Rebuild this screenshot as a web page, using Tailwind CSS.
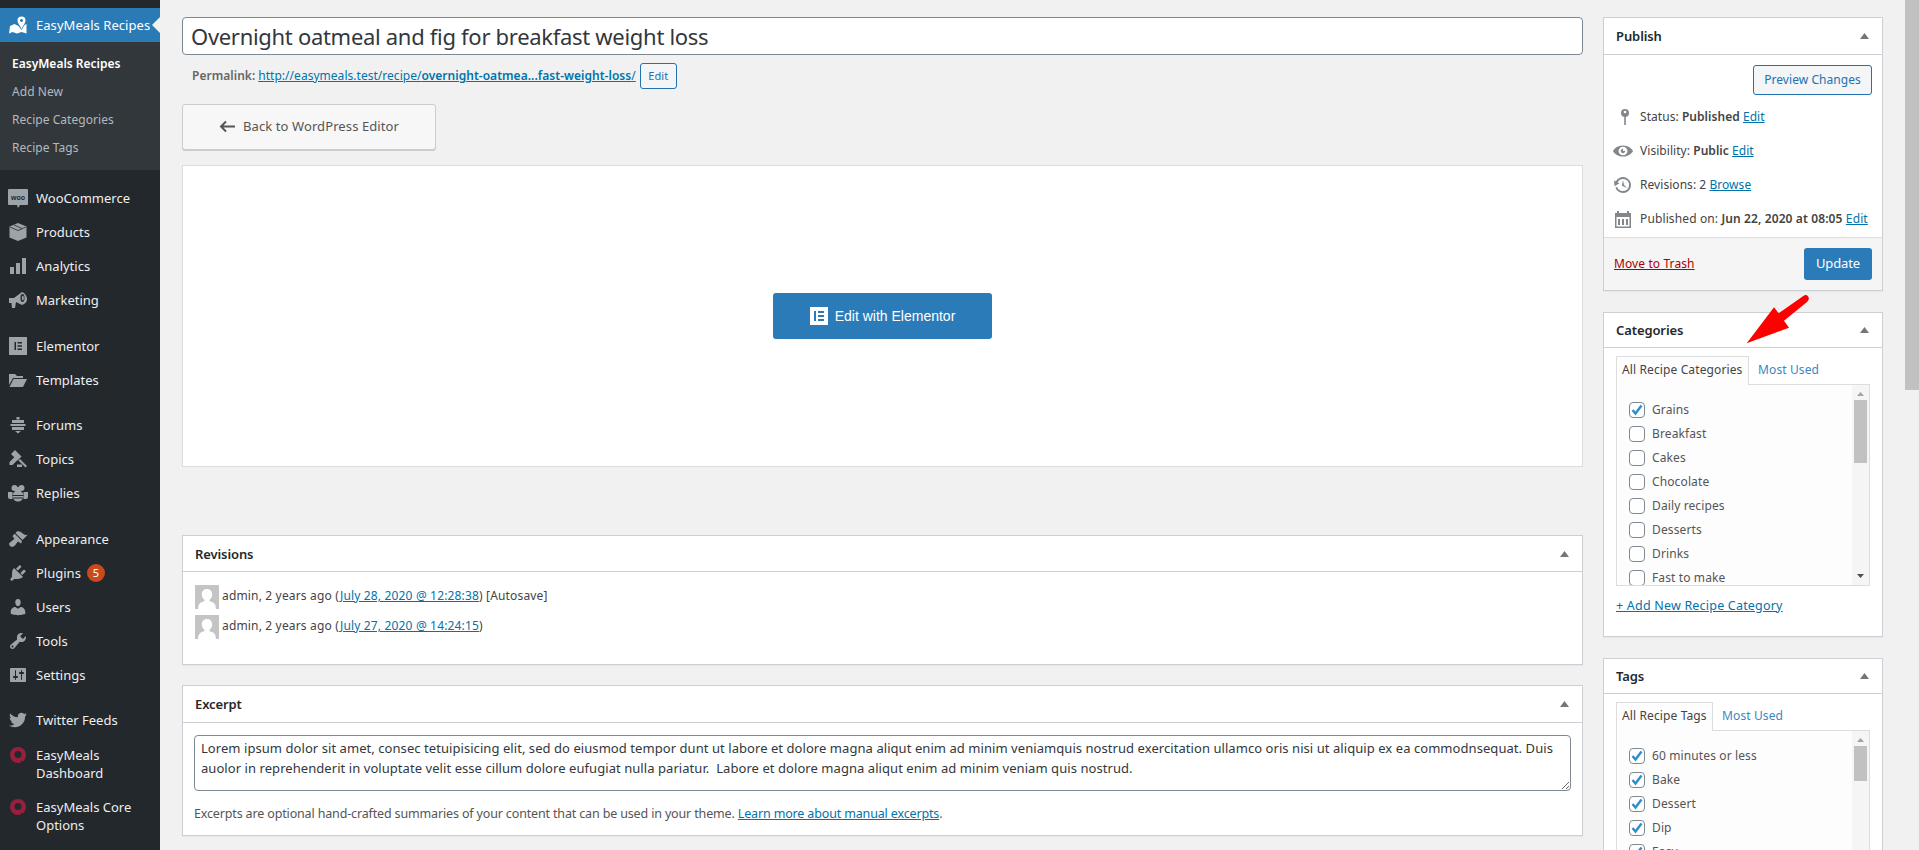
<!DOCTYPE html>
<html lang="en">
  <head>
    <meta charset="UTF-8" />
    <title>Edit Recipe</title>
    <script src="https://cdn.jsdelivr.net/npm/@tailwindcss/browser@4"></script>
  </head>
  <body class="bg-[#f1f1f1] text-[#444] text-[13px] font-['Noto_Sans',sans-serif] overflow-hidden">
    <div class="relative flex h-[850px] w-[1919px] overflow-hidden">
      <!-- Sidebar -->
      <aside class="w-[160px] shrink-0 bg-[#23282d] text-[#eee] pt-[8px]">
        <div class="relative flex items-center h-[34px] bg-[#2a7ab5] text-white">
          <span class="w-[36px] flex justify-center"><svg class="w-[20px] h-[20px]" viewBox="0 0 20 20" fill="#fff"><path d="M2 11l4.500-2 4 2 3 4 3-5 2-1v9.500l-5-1.500-4.500 1.500-4.500-1.500-3.500 1.500z"/><path fill-rule="evenodd" d="M13.500 1.500a4 4 0 0 1 4 4c0 2.500-2.500 5-4 8.500-1.500-3.500-4-6-4-8.500a4 4 0 0 1 4-4zm0 2.500a1.500 1.500 0 1 0 .01 0z"/></svg></span>
          <span class="pt-[2px] tracking-[0.05px]">EasyMeals Recipes</span>
          <span class="absolute right-0 top-[9px] border-y-[8px] border-r-[8px] border-y-transparent border-r-[#f1f1f1]"></span>
        </div>
        <div class="bg-[#32373c] py-[8px] text-[12px] text-[#b4b9be]">
          <div class="h-[28px] pl-[12px] flex items-center font-semibold text-white">EasyMeals Recipes</div>
          <div class="h-[28px] pl-[12px] flex items-center tracking-[0.05px]">Add New</div>
          <div class="h-[28px] pl-[12px] flex items-center tracking-[0.05px]">Recipe Categories</div>
          <div class="h-[28px] pl-[12px] flex items-center tracking-[0.05px]">Recipe Tags</div>
        </div>

        <div class="mt-[11px]">
          <div class="flex items-center h-[34px]">
            <span class="w-[36px] flex justify-center"><svg class="w-[20px] h-[20px]" viewBox="0 0 20 20"><path fill="#9ea3a8" d="M1 1h18a1 1 0 0 1 1 1v14a1 1 0 0 1-1 1h-7l-2 3-1-3H1a1 1 0 0 1-1-1V2a1 1 0 0 1 1-1z"/><text x="10" y="11.500" text-anchor="middle" font-size="7" font-weight="700" fill="#23282d" font-family="Liberation Sans">woo</text></svg></span>
            <span class="pt-[2px]">WooCommerce</span>
          </div>
          <div class="flex items-center h-[34px]">
            <span class="w-[36px] flex justify-center"><svg class="w-[20px] h-[20px]" viewBox="0 0 20 20"><path fill="#9ea3a8" d="M10 1l8.500 3.500v11L10 19l-8.500-3.500v-11z"/><path fill="none" stroke="#23282d" stroke-width=".8" d="M2 5l8 3.500L18 5M6 3l8 3.500"/></svg></span>
            <span class="pt-[2px]">Products</span>
          </div>
          <div class="flex items-center h-[34px]">
            <span class="w-[36px] flex justify-center"><svg class="w-[20px] h-[20px]" viewBox="0 0 20 20" fill="#9ea3a8"><path d="M2 11h4v7H2zM8 7h4v11H8zM14 2h4v16h-4z"/></svg></span>
            <span class="pt-[2px]">Analytics</span>
          </div>
          <div class="flex items-center h-[34px]">
            <span class="w-[36px] flex justify-center"><svg class="w-[20px] h-[20px]" viewBox="0 0 20 20" fill="#9ea3a8"><path d="M1 8h5l8-6 2 1c2 2 3 4 3 6s-1 4-3 5l-2 1-6-3-1 6H4l-.5-5H1z"/><ellipse cx="14.500" cy="8" rx="2" ry="4" fill="#23282d"/><ellipse cx="14.800" cy="8" rx="1" ry="2.500"/></svg></span>
            <span class="pt-[2px]">Marketing</span>
          </div>
        </div>

        <div class="mt-[12px]">
          <div class="flex items-center h-[34px]">
            <span class="w-[36px] flex justify-center"><svg class="w-[20px] h-[20px]" viewBox="0 0 20 20"><path fill="#9ea3a8" d="M1 1h18v18H1z"/><path fill="#23282d" d="M6.500 6h1.500v8H6.500zM9.500 6h4.500v1.500H9.500zM9.500 9.200h4.500v1.500H9.500zM9.500 12.500h4.500V14H9.500z"/></svg></span>
            <span class="pt-[2px]">Elementor</span>
          </div>
          <div class="flex items-center h-[34px]">
            <span class="w-[36px] flex justify-center"><svg class="w-[20px] h-[20px]" viewBox="0 0 20 20" fill="#9ea3a8"><path d="M1 4h6l2 2h6v2H5L1 15z"/><path d="M5.500 9H19l-4 8H1.500z"/></svg></span>
            <span class="pt-[2px]">Templates</span>
          </div>
        </div>

        <div class="mt-[11px]">
          <div class="flex items-center h-[34px]">
            <span class="w-[36px] flex justify-center"><svg class="w-[20px] h-[20px]" viewBox="0 0 20 20" fill="#9ea3a8"><path d="M8.500 2h3v2.500h-3zM4 5h12v3H4zM2.500 9h15v2h-15zM4 12h12v3H4zM7 16h6l-3 2.500z"/></svg></span>
            <span class="pt-[2px]">Forums</span>
          </div>
          <div class="flex items-center h-[34px]">
            <span class="w-[36px] flex justify-center"><svg class="w-[20px] h-[20px]" viewBox="0 0 20 20" fill="#9ea3a8"><path d="M7 1l6.500 6.500-4 4L3 5zM1.500 13l5-5 3 3-5 5H1.500zM12 10l7 7-1.500 1.500-7-7zM9 15.500h5V18H9z"/></svg></span>
            <span class="pt-[2px]">Topics</span>
          </div>
          <div class="flex items-center h-[34px]">
            <span class="w-[36px] flex justify-center"><svg class="w-[20px] h-[20px]" viewBox="0 0 20 20" fill="#9ea3a8"><circle cx="6.500" cy="5" r="3"/><circle cx="13.500" cy="5" r="3"/><circle cx="10" cy="7" r="3"/><ellipse cx="10" cy="13" rx="5.500" ry="5.500"/><path d="M0 9h4.500v7H2a2 2 0 0 1-2-2zM20 9h-4.500v7H18a2 2 0 0 0 2-2z"/><path stroke="#23282d" d="M4.500 12.500h11M5 15h10"/></svg></span>
            <span class="pt-[2px]">Replies</span>
          </div>
        </div>

        <div class="mt-[12px]">
          <div class="flex items-center h-[34px]">
            <span class="w-[36px] flex justify-center"><svg class="w-[20px] h-[20px]" viewBox="0 0 20 20" fill="#9ea3a8"><path d="M14.480 11.060L7.410 3.990l1.500-1.500c.5-.56 2.300-.47 3.510.32 1.210.8 1.430 1.280 2.910 2.100 1.180.64 2.450 1.260 4.450.85zm-.71.71L6.700 4.700 4.930 6.470c-.39.39-.39 1.020 0 1.410l1.060 1.060c.39.39.39 1.030 0 1.420-.6.6-1.430 1.110-2.210 1.690-.35.260-.7.530-1.010.84C1.430 13.230.99 14.400 1.250 15.500c.27 1.100 1.140 1.960 2.230 2.230 1.100.27 2.270-.18 3.610-1.530.31-.31.58-.66.84-1.010.58-.78 1.090-1.610 1.690-2.210.39-.39 1.030-.39 1.420 0l1.060 1.060c.39.39 1.020.39 1.410 0z"/></svg></span>
            <span class="pt-[2px]">Appearance</span>
          </div>
          <div class="flex items-center h-[34px]">
            <span class="w-[36px] flex justify-center"><svg class="w-[20px] h-[20px]" viewBox="0 0 20 20" fill="#9ea3a8"><path d="M13.110 4.360L9.870 7.600 8 5.730l3.240-3.240c.35-.34 1.050-.2 1.560.32.52.51.66 1.210.31 1.550zm-8 1.770l.91-1.120 9.010 9.010-1.190.84c-.71.71-2.630 1.160-3.820 1.160H6.140L4.900 17.260c-.59.59-1.540.59-2.120 0-.59-.58-.59-1.530 0-2.120l1.240-1.240v-3.880c0-1.130.4-3.190 1.090-3.890zm7.260 3.970l3.240-3.240c.34-.35 1.040-.21 1.550.31.52.51.66 1.210.31 1.550l-3.240 3.250z"/></svg></span>
            <span class="pt-[2px]">Plugins</span>
            <span class="ml-[6px] w-[18px] h-[18px] rounded-full bg-[#ca4a1f] text-white text-[11px] flex items-center justify-center">5</span>
          </div>
          <div class="flex items-center h-[34px]">
            <span class="w-[36px] flex justify-center"><svg class="w-[20px] h-[20px]" viewBox="0 0 20 20" fill="#9ea3a8"><path d="M10 9.250c-2.270 0-2.730-3.440-2.730-3.440C7 4.020 7.820 2 9.970 2c2.160 0 2.980 2.020 2.710 3.810 0 0-.41 3.440-2.680 3.440zm0 2.570L12.720 10c2.390 0 4.520 2.330 4.520 4.530v2.490s-3.650 1.130-7.240 1.130c-3.650 0-7.240-1.130-7.240-1.130v-2.490c0-2.250 1.940-4.480 4.470-4.480z"/></svg></span>
            <span class="pt-[2px]">Users</span>
          </div>
          <div class="flex items-center h-[34px]">
            <span class="w-[36px] flex justify-center"><svg class="w-[20px] h-[20px]" viewBox="0 0 20 20" fill="#9ea3a8"><path d="M16.680 9.770c-1.340 1.340-3.300 1.670-4.950.99l-5.410 6.520c-.99.99-2.590.99-3.580 0s-.99-2.590 0-3.570l6.520-5.420c-.68-1.650-.35-3.610.99-4.950 1.280-1.280 3.120-1.620 4.720-1.060l-2.890 2.890 2.820 2.820 2.860-2.870c.53 1.580.18 3.390-1.080 4.650zM3.810 16.210c.4.39 1.040.39 1.430 0 .4-.4.4-1.040 0-1.430-.39-.4-1.030-.4-1.430 0-.39.39-.39 1.030 0 1.430z"/></svg></span>
            <span class="pt-[2px]">Tools</span>
          </div>
          <div class="flex items-center h-[34px]">
            <span class="w-[36px] flex justify-center"><svg class="w-[20px] h-[20px]" viewBox="0 0 20 20" fill="#9ea3a8"><path d="M18 16V4c0-.55-.45-1-1-1H3c-.55 0-1 .45-1 1v12c0 .55.45 1 1 1h14c.55 0 1-.45 1-1zM8 11h1c.55 0 1 .45 1 1s-.45 1-1 1H8v1.500c0 .28-.22.5-.5.5s-.5-.22-.5-.5V13H6c-.55 0-1-.45-1-1s.45-1 1-1h1V5.500c0-.28.22-.5.5-.5s.5.22.5.5V11zm5-2h-1c-.55 0-1-.45-1-1s.45-1 1-1h1V5.500c0-.28.22-.5.5-.5s.5.22.5.5V7h1c.55 0 1 .45 1 1s-.45 1-1 1h-1v5.500c0 .28-.22.5-.5.5s-.5-.22-.5-.5V9z"/></svg></span>
            <span class="pt-[2px]">Settings</span>
          </div>
        </div>

        <div class="mt-[11px]">
          <div class="flex items-center h-[34px]">
            <span class="w-[36px] flex justify-center"><svg class="w-[20px] h-[20px]" viewBox="0 0 20 20" fill="#9ea3a8"><path d="M18.940 4.460c-.49.73-1.110 1.380-1.830 1.900.01.15.01.31.01.47 0 4.850-3.690 10.440-10.430 10.440-2.070 0-4-.61-5.630-1.650.29.03.58.05.88.05 1.720 0 3.300-.59 4.550-1.570-1.600-.03-2.950-1.090-3.420-2.550.22.04.45.07.69.07.33 0 .66-.05.96-.13-1.670-.34-2.940-1.820-2.940-3.600v-.04c.5.27 1.060.44 1.660.46-.98-.66-1.630-1.780-1.630-3.060 0-.67.18-1.300.5-1.840 1.810 2.220 4.510 3.680 7.560 3.830-.06-.27-.1-.55-.1-.84 0-2.020 1.650-3.660 3.670-3.660 1.060 0 2.010.44 2.680 1.160.83-.17 1.620-.47 2.330-.9-.28.85-.82 1.570-1.550 2.020.73-.08 1.430-.28 2.090-.57z"/></svg></span>
            <span class="pt-[2px]">Twitter Feeds</span>
          </div>
          <div class="flex h-[53px] pt-[9px]">
            <span class="w-[36px] flex justify-center"><svg class="w-[20px] h-[20px]" viewBox="0 0 20 20"><circle cx="10" cy="9" r="8" fill="#98203f"/><circle cx="10" cy="8.500" r="3.500" fill="#23282d"/><path fill="#23282d" d="M13 14l3 4h-3z"/></svg></span>
            <span class="leading-[18px]">EasyMeals<br />Dashboard</span>
          </div>
          <div class="flex h-[53px] pt-[8px]">
            <span class="w-[36px] flex justify-center"><svg class="w-[20px] h-[20px]" viewBox="0 0 20 20"><circle cx="10" cy="9" r="8" fill="#98203f"/><circle cx="10" cy="8.500" r="3.500" fill="#23282d"/><path fill="#23282d" d="M13 14l3 4h-3z"/></svg></span>
            <span class="leading-[18px]">EasyMeals Core<br />Options</span>
          </div>
        </div>
      </aside>

      <!-- Main column -->
      <main class="w-[1401px] shrink-0 ml-[22px] pt-[17px]">
        <input
          type="text"
          value="Overnight oatmeal and fig for breakfast weight loss"
          class="block w-full h-[38px] bg-white border border-[#7e8993] rounded-[4px] px-[8px] text-[22px] text-[#32373c] tracking-[-0.3px]"
        />
        <div class="flex items-center h-[26px] mt-[8px] pl-[10px] text-[12px] tracking-[0.03px] text-[#666]">
          <strong class="font-semibold">Permalink:</strong>
          <a href="#" class="ml-[3px] text-[#0073aa] underline">http://easymeals.test/recipe/<span class="font-semibold">overnight-oatmea...fast-weight-loss</span>/</a>
          <button class="ml-[4px] w-[37px] h-[26px] border border-[#2271b1] rounded-[3px] bg-[#f3f5f6] text-[#2271b1] text-[11px]">Edit</button>
        </div>

        <button class="flex items-center justify-center w-[254px] h-[46px] mt-[15px] bg-[#f7f7f7] border border-[#ccc] rounded-[3px] shadow-[0_1px_0_#ccc] text-[#555] text-[13px] tracking-[0.1px]">
          <svg class="w-[16px] h-[16px] mr-[8px]" viewBox="0 0 16 16" fill="none" stroke="#555" stroke-width="2"><path d="M16 7.500H2M7 2.500l-5 5 5 5"/></svg>
          Back to WordPress Editor
        </button>

        <div class="flex items-center justify-center h-[302px] mt-[15px] bg-white border border-[#ddd]">
          <button class="flex items-center justify-center w-[219px] h-[46px] bg-[#2b7bb9] rounded-[3px] text-white text-[14px] font-['Liberation_Sans',sans-serif]">
            <span class="flex items-center justify-center w-[18px] h-[18px] bg-white mr-[7px]"><svg class="w-[12px] h-[12px]" viewBox="0 0 12 12" fill="#2b7bb9"><path d="M1 1h2v10H1zM5 1h6v2H5zM5 5h6v2H5zM5 9h6v2H5z"/></svg></span>
            Edit with Elementor
          </button>
        </div>

        <section class="h-[130px] mt-[68px] bg-white border border-[#ccd0d4] shadow-[0_1px_1px_rgba(0,0,0,0.04)]">
          <div class="flex items-center justify-between h-[36px] pl-[12px] pr-[13px] border-b border-[#ccd0d4] font-semibold tracking-[-0.1px] text-[#23282d]">
            <span class="pt-[2px]">Revisions</span>
            <svg class="w-[9px] h-[6px]" viewBox="0 0 9 6" fill="#72777c"><path d="M4.500 0L9 6H0z"/></svg>
          </div>
          <div class="pt-[13px] pl-[12px] text-[12px] tracking-[0.16px]">
            <div class="flex items-center h-[24px]">
              <svg class="w-[24px] h-[24px] mr-[3px]" viewBox="0 0 23 24" preserveAspectRatio="none"><path fill="#c4c4c4" d="M0 0h23v24H0z"/><path fill="#fff" d="M11.500 4c3 0 5 2.200 5 5.500 0 2.500-1.200 4.500-2.800 5.500.2 1 .8 1.500 2.300 2 2.500.8 4 2.500 4 7H3c0-4.500 1.500-6.200 4-7 1.500-.5 2.100-1 2.300-2C7.700 14 6.500 12 6.500 9.500 6.500 6.200 8.500 4 11.500 4z"/></svg>
              <span class="pb-[2px]">admin, 2 years ago (<a href="#" class="text-[#0073aa] underline">July 28, 2020 @ 12:28:38</a>) [Autosave]</span>
            </div>
            <div class="flex items-center h-[24px] mt-[6px]">
              <svg class="w-[24px] h-[24px] mr-[3px]" viewBox="0 0 23 24" preserveAspectRatio="none"><path fill="#c4c4c4" d="M0 0h23v24H0z"/><path fill="#fff" d="M11.500 4c3 0 5 2.200 5 5.500 0 2.500-1.200 4.500-2.800 5.500.2 1 .8 1.500 2.300 2 2.500.8 4 2.500 4 7H3c0-4.500 1.500-6.200 4-7 1.500-.5 2.100-1 2.300-2C7.700 14 6.500 12 6.500 9.500 6.500 6.200 8.500 4 11.500 4z"/></svg>
              <span class="pb-[2px]">admin, 2 years ago (<a href="#" class="text-[#0073aa] underline">July 27, 2020 @ 14:24:15</a>)</span>
            </div>
          </div>
        </section>

        <section class="h-[151px] mt-[20px] bg-white border border-[#ccd0d4] shadow-[0_1px_1px_rgba(0,0,0,0.04)]">
          <div class="flex items-center justify-between h-[37px] pl-[12px] pr-[13px] border-b border-[#ccd0d4] font-semibold tracking-[-0.1px] text-[#23282d]">
            <span class="pt-[2px]">Excerpt</span>
            <svg class="w-[9px] h-[6px]" viewBox="0 0 9 6" fill="#72777c"><path d="M4.500 0L9 6H0z"/></svg>
          </div>
          <div class="pt-[12px] px-[11px]">
            <textarea rows="2" class="block w-full h-[56px] border border-[#7e8993] rounded-[4px] px-[6px] py-[2px] text-[13px] leading-[20px] text-[#32373c] whitespace-pre overflow-hidden tracking-[0.06px]">Lorem ipsum dolor sit amet, consec tetuipisicing elit, sed do eiusmod tempor dunt ut labore et dolore magna aliqut enim ad minim veniamquis nostrud exercitation ullamco oris nisi ut aliquip ex ea commodnsequat. Duis
auolor in reprehenderit in voluptate velit esse cillum dolore eufugiat nulla pariatur.  Labore et dolore magna aliqut enim ad minim veniam quis nostrud.</textarea>
            <p class="mt-[14px] text-[12.500px] tracking-[-0.15px] text-[#555]">Excerpts are optional hand-crafted summaries of your content that can be used in your theme. <a href="#" class="text-[#0073aa] underline">Learn more about manual excerpts</a>.</p>
          </div>
        </section>
      </main>

      <!-- Right column -->
      <div class="w-[280px] shrink-0 ml-[20px] pt-[17px]">
        <section class="h-[274px] flex flex-col bg-white border border-[#ccd0d4] shadow-[0_1px_1px_rgba(0,0,0,0.04)]">
          <div class="flex items-center justify-between h-[37px] pl-[12px] pr-[13px] border-b border-[#ccd0d4] font-semibold tracking-[-0.1px] text-[#23282d]">
            <span class="pt-[2px]">Publish</span>
            <svg class="w-[9px] h-[6px]" viewBox="0 0 9 6" fill="#72777c"><path d="M4.500 0L9 6H0z"/></svg>
          </div>
          <div class="flex-1 pt-[10px] text-[12px] tracking-[0.05px]">
            <div class="flex justify-end pr-[10px]">
              <button class="w-[119px] h-[30px] border border-[#2271b1] rounded-[3px] bg-[#f3f5f6] text-[#2271b1] text-[12px]">Preview Changes</button>
            </div>
            <div class="flex items-center h-[34px] mt-[5px]">
              <span class="w-[36px] pl-[11px]"><svg class="w-[20px] h-[20px]" viewBox="0 0 20 20" fill="#82878c"><circle cx="10" cy="6" r="4"/><path d="M9.200 9h1.600v9H9.200z"/><circle cx="10" cy="5" r="1.300" fill="#fff"/></svg></span>
              <span>Status: <strong class="font-semibold">Published</strong> <a href="#" class="text-[#0073aa] underline">Edit</a></span>
            </div>
            <div class="flex items-center h-[34px]">
              <span class="w-[36px] pl-[9px]"><svg class="w-[20px] h-[20px]" viewBox="0 0 20 20" fill="#82878c"><path d="M10 4.400C3.439 4.400 0 9.232 0 10c0 .766 3.439 5.600 10 5.600 6.560 0 10-4.834 10-5.600 0-.768-3.440-5.600-10-5.600zm0 9.907c-2.455 0-4.445-1.928-4.445-4.307S7.545 5.691 10 5.691s4.444 1.930 4.444 4.309-1.989 4.307-4.444 4.307zM10 10c-.407-.447.663-2.154 0-2.154-1.228 0-2.223.965-2.223 2.154s.995 2.154 2.223 2.154c1.227 0 2.223-.965 2.223-2.154 0-.547-1.877.379-2.223 0z"/></svg></span>
              <span>Visibility: <strong class="font-semibold">Public</strong> <a href="#" class="text-[#0073aa] underline">Edit</a></span>
            </div>
            <div class="flex items-center h-[34px]">
              <span class="w-[36px] pl-[9px]"><svg class="w-[20px] h-[20px]" viewBox="0 0 20 20" fill="#82878c"><path d="M13.650 2.880c3.930 2.010 5.480 6.840 3.470 10.770s-6.830 5.480-10.770 3.470c-1.870-.96-3.200-2.560-3.860-4.400l1.640-1.030c.45 1.570 1.520 2.950 3.080 3.760 3.010 1.540 6.690.35 8.230-2.660 1.550-3.010.36-6.690-2.650-8.240C9.780 3.010 6.100 4.200 4.560 7.210l1.880.97-4.950 3.080-.39-5.820 1.780.91C4.900 2.400 9.750.89 13.650 2.880zm-4.360 7.830C9.110 10.530 9 10.280 9 10c0-.07.03-.12.04-.19h-.01L10 5l.97 4.810L14 13l-4.500-2.120.02-.02c-.08-.04-.16-.09-.23-.15z"/></svg></span>
              <span>Revisions: 2 <a href="#" class="text-[#0073aa] underline">Browse</a></span>
            </div>
            <div class="flex items-center h-[34px] tracking-[0.12px]">
              <span class="w-[36px] pl-[9px]"><svg class="w-[20px] h-[20px]" viewBox="0 0 20 20" fill="#82878c"><path fill-rule="evenodd" d="M2 4h2V2h2v2h8V2h2v2h2v15H2zM3.500 8v9.500h13V8zM5 10h2v6H5zM9 10h2v6H9zM13 10h2v6h-2z"/></svg></span>
              <span>Published on: <strong class="font-semibold">Jun 22, 2020 at 08:05</strong> <a href="#" class="text-[#0073aa] underline">Edit</a></span>
            </div>
          </div>
          <div class="flex items-center justify-between h-[53px] pl-[10px] pr-[10px] bg-[#f5f5f5] border-t border-[#ddd] text-[12px] tracking-[0.1px]">
            <a href="#" class="text-[#a00] underline">Move to Trash</a>
            <button class="w-[68px] h-[32px] rounded-[3px] bg-[#2b7bb9] text-white text-[13px] tracking-[-0.1px]">Update</button>
          </div>
        </section>

        <section class="h-[325px] mt-[21px] bg-white border border-[#ccd0d4] shadow-[0_1px_1px_rgba(0,0,0,0.04)]">
          <div class="flex items-center justify-between h-[35px] pl-[12px] pr-[13px] border-b border-[#ccd0d4] font-semibold tracking-[-0.1px] text-[#23282d]">
            <span class="pt-[2px]">Categories</span>
            <svg class="w-[9px] h-[6px]" viewBox="0 0 9 6" fill="#72777c"><path d="M4.500 0L9 6H0z"/></svg>
          </div>
          <div class="pt-[8px] px-[12px] text-[12px] tracking-[0.12px]">
            <div class="flex h-[29px] relative z-10">
              <span class="flex items-center w-[133px] h-[29px] pb-[2px] pl-[5px] border border-b-0 border-[#ddd] bg-[#fdfdfd]">All Recipe Categories</span>
              <a href="#" class="flex items-center pb-[2px] ml-[9px] text-[#3a87c0]">Most Used</a>
            </div>
            <div class="flex h-[202px] -mt-[1px] border border-[#ddd] bg-[#fdfdfd] overflow-hidden">
              <ul class="flex-1 pt-[13px] pl-[12px] text-[#555]">
                <li class="flex items-center h-[24px]"><span class="flex items-center justify-center w-[16px] h-[16px] mr-[7px] bg-white border border-[#7e8993] rounded-[4px]"><svg class="w-[14px] h-[14px]" viewBox="0 0 14 14" fill="none" stroke="#2b8fc9" stroke-width="2.400"><path d="M2.500 7l3 3.500 6-8"/></svg></span>Grains</li>
                <li class="flex items-center h-[24px]"><span class="w-[16px] h-[16px] mr-[7px] bg-white border border-[#7e8993] rounded-[4px]"></span>Breakfast</li>
                <li class="flex items-center h-[24px]"><span class="w-[16px] h-[16px] mr-[7px] bg-white border border-[#7e8993] rounded-[4px]"></span>Cakes</li>
                <li class="flex items-center h-[24px]"><span class="w-[16px] h-[16px] mr-[7px] bg-white border border-[#7e8993] rounded-[4px]"></span>Chocolate</li>
                <li class="flex items-center h-[24px]"><span class="w-[16px] h-[16px] mr-[7px] bg-white border border-[#7e8993] rounded-[4px]"></span>Daily recipes</li>
                <li class="flex items-center h-[24px]"><span class="w-[16px] h-[16px] mr-[7px] bg-white border border-[#7e8993] rounded-[4px]"></span>Desserts</li>
                <li class="flex items-center h-[24px]"><span class="w-[16px] h-[16px] mr-[7px] bg-white border border-[#7e8993] rounded-[4px]"></span>Drinks</li>
                <li class="flex items-center h-[24px]"><span class="w-[16px] h-[16px] mr-[7px] bg-white border border-[#7e8993] rounded-[4px]"></span>Fast to make</li>
              </ul>
              <div class="w-[17px] flex flex-col items-center bg-[#f5f5f5]">
                <svg class="w-[7px] h-[4px] mt-[7px]" viewBox="0 0 7 4" fill="#a3a3a3"><path d="M3.500 0L7 4H0z"/></svg>
                <div class="w-[13px] h-[63px] mt-[4px] bg-[#c1c1c1]"></div>
                <svg class="w-[7px] h-[4px] mt-auto mb-[7px]" viewBox="0 0 7 4" fill="#505050"><path d="M0 0h7L3.500 4z"/></svg>
              </div>
            </div>
            <a href="#" class="block mt-[11px] text-[12.500px] tracking-[0.2px] text-[#0073aa] underline">+ Add New Recipe Category</a>
          </div>
        </section>

        <section class="h-[300px] mt-[21px] bg-white border border-[#ccd0d4] shadow-[0_1px_1px_rgba(0,0,0,0.04)]">
          <div class="flex items-center justify-between h-[35px] pl-[12px] pr-[13px] border-b border-[#ccd0d4] font-semibold tracking-[-0.1px] text-[#23282d]">
            <span class="pt-[2px]">Tags</span>
            <svg class="w-[9px] h-[6px]" viewBox="0 0 9 6" fill="#72777c"><path d="M4.500 0L9 6H0z"/></svg>
          </div>
          <div class="pt-[8px] px-[12px] text-[12px] tracking-[0.12px]">
            <div class="flex h-[29px] relative z-10">
              <span class="flex items-center w-[97px] h-[29px] pb-[2px] pl-[5px] border border-b-0 border-[#ddd] bg-[#fdfdfd]">All Recipe Tags</span>
              <a href="#" class="flex items-center pb-[2px] ml-[9px] text-[#3a87c0]">Most Used</a>
            </div>
            <div class="flex h-[202px] -mt-[1px] border border-[#ddd] bg-[#fdfdfd] overflow-hidden">
              <ul class="flex-1 pt-[13px] pl-[12px] text-[#555]">
                <li class="flex items-center h-[24px]"><span class="flex items-center justify-center w-[16px] h-[16px] mr-[7px] bg-white border border-[#7e8993] rounded-[4px]"><svg class="w-[14px] h-[14px]" viewBox="0 0 14 14" fill="none" stroke="#2b8fc9" stroke-width="2.400"><path d="M2.500 7l3 3.500 6-8"/></svg></span>60 minutes or less</li>
                <li class="flex items-center h-[24px]"><span class="flex items-center justify-center w-[16px] h-[16px] mr-[7px] bg-white border border-[#7e8993] rounded-[4px]"><svg class="w-[14px] h-[14px]" viewBox="0 0 14 14" fill="none" stroke="#2b8fc9" stroke-width="2.400"><path d="M2.500 7l3 3.500 6-8"/></svg></span>Bake</li>
                <li class="flex items-center h-[24px]"><span class="flex items-center justify-center w-[16px] h-[16px] mr-[7px] bg-white border border-[#7e8993] rounded-[4px]"><svg class="w-[14px] h-[14px]" viewBox="0 0 14 14" fill="none" stroke="#2b8fc9" stroke-width="2.400"><path d="M2.500 7l3 3.500 6-8"/></svg></span>Dessert</li>
                <li class="flex items-center h-[24px]"><span class="flex items-center justify-center w-[16px] h-[16px] mr-[7px] bg-white border border-[#7e8993] rounded-[4px]"><svg class="w-[14px] h-[14px]" viewBox="0 0 14 14" fill="none" stroke="#2b8fc9" stroke-width="2.400"><path d="M2.500 7l3 3.500 6-8"/></svg></span>Dip</li>
                <li class="flex items-center h-[24px]"><span class="flex items-center justify-center w-[16px] h-[16px] mr-[7px] bg-white border border-[#7e8993] rounded-[4px]"><svg class="w-[14px] h-[14px]" viewBox="0 0 14 14" fill="none" stroke="#2b8fc9" stroke-width="2.400"><path d="M2.500 7l3 3.500 6-8"/></svg></span>Easy</li>
              </ul>
              <div class="w-[17px] flex flex-col items-center bg-[#f5f5f5]">
                <svg class="w-[7px] h-[4px] mt-[7px]" viewBox="0 0 7 4" fill="#a3a3a3"><path d="M3.500 0L7 4H0z"/></svg>
                <div class="w-[13px] h-[35px] mt-[4px] bg-[#c1c1c1]"></div>
              </div>
            </div>
          </div>
        </section>
      </div>

      <!-- Window scrollbar -->
      <div class="w-[14px] shrink-0 ml-[22px]">
        <div class="h-[390px] bg-[#c1c1c1]"></div>
      </div>

      <!-- Red annotation arrow -->
      <svg class="absolute left-[1740px] top-[290px] w-[75px] h-[60px]" viewBox="0 0 75 60" fill="#ff0000">
        <path d="M6.700 53.300L34 17.300l4.700 6L63.300 6c2-1.500 4-1 5 .8 1 1.700.5 3.400-1 4.900L44 30.700l5 7z"/>
      </svg>
    </div>
  </body>
</html>
